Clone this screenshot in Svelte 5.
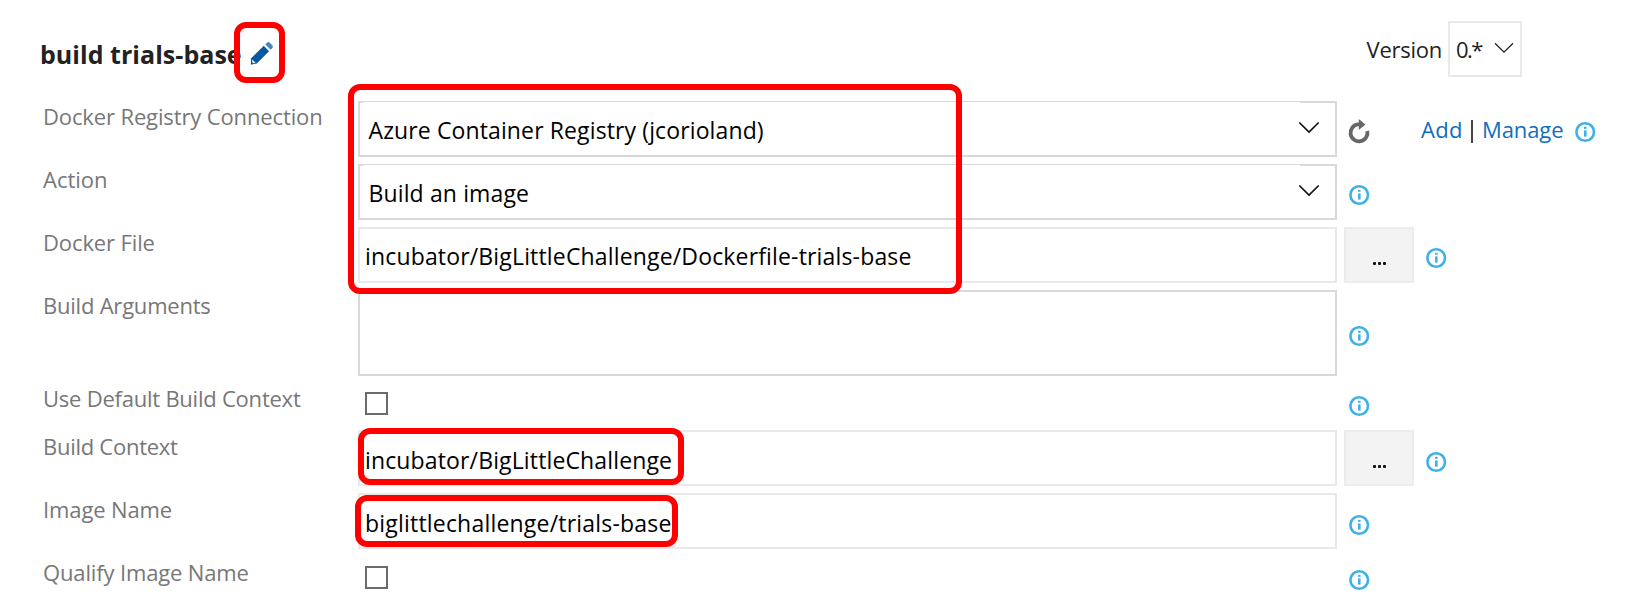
<script>
  const rows = [
    { label: 'Docker Registry Connection', ls: -0.13, kind: 'select', value: 'Azure Container Registry (jcorioland)', vs: 0.12, links: true },
    { label: 'Action', ls: 0, kind: 'select', value: 'Build an image', vs: 0.13 },
    { label: 'Docker File', ls: -0.12, kind: 'text', value: 'incubator/BigLittleChallenge/Dockerfile-trials-base', vs: 0.16, browse: true },
    { label: 'Build Arguments', ls: -0.22, kind: 'area' },
    { label: 'Use Default Build Context', ls: -0.23, kind: 'check' },
    { label: 'Build Context', ls: -0.27, kind: 'text low', value: 'incubator/BigLittleChallenge', vs: 0.14, browse: true },
    { label: 'Image Name', ls: -0.12, kind: 'text low', value: 'biglittlechallenge/trials-base', vs: 0.2 },
    { label: 'Qualify Image Name', ls: -0.14, kind: 'check last' }
  ];
</script>

{#snippet info()}
  <svg class="info" width="22" height="22" viewBox="0 0 22 22">
    <circle cx="11.2" cy="11" r="8.8" fill="#fff" stroke="#3fb0e8" stroke-width="2.6" />
    <rect x="10" y="5.8" width="2.6" height="2" fill="#3fb0e8" />
    <rect x="10" y="9.4" width="2.6" height="6.2" fill="#3fb0e8" />
  </svg>
{/snippet}

<main>
  <header>
    <h1>build trials-base</h1>
    <svg class="pencil" width="24" height="25" viewBox="0 0 24 25">
      <path d="M1.2 17.2 13.8 4.8 19 10.3 6.7 22.4 0.8 23.8Z" fill="#0558a2" />
      <path d="M2.4 18.6 5.6 21.8 3.2 22.3 2 21.1Z" fill="#dce8f3" />
      <path d="M15.3 3.4 17.2 1.5Q18.4.5 19.6 1.6L22.4 4.6Q23.4 5.8 22.4 7L20.6 8.8Z" fill="#4a86bd" />
    </svg>
    <div class="version">
      <span class="vlabel">Version</span>
      <div class="vbox">
        <span>0.*</span>
        <svg width="20" height="12" viewBox="0 0 20 12"><path d="M1 1.2 10 10.1 19 1.2" fill="none" stroke="#222" stroke-width="1.3" /></svg>
      </div>
    </div>
  </header>

  <section>
    {#each rows as r}
      <div class="row {r.kind}">
        <div class="label" style="letter-spacing: {r.ls}px">{r.label}</div>
        {#if r.kind.startsWith('check')}
          <div class="slot"><span class="box"></span></div>
        {:else}
          <div class="field">
            {#if r.value}<span style="letter-spacing: {r.vs}px">{r.value}</span>{/if}
            {#if r.kind === 'select'}
              <svg width="22" height="13" viewBox="0 0 22 13"><path d="M1.3 1.5 11 11.1 20.7 1.5" fill="none" stroke="#111" stroke-width="1.7" /></svg>
            {/if}
          </div>
        {/if}
        <div class="tail">
          {#if r.links}
            <svg class="refresh" width="24" height="26" viewBox="0 0 24 26">
              <path d="M13.2 6.4H10.8A8.5 8.5 0 1 0 20.3 13" fill="none" stroke="#666" stroke-width="3.8" />
              <path d="M11.8 1 18.4 6.5 11.8 12Z" fill="#666" />
            </svg>
            <a class="add" href="#add">Add</a><i></i><a class="manage" href="#manage">Manage</a>
          {/if}
          {#if r.browse}<button><b></b><b></b><b></b></button>{/if}
          {@render info()}
        </div>
      </div>
    {/each}
  </section>

  <div class="mark m1"></div>
  <div class="mark m2"></div>
  <div class="mark m3"></div>
  <div class="mark m4"></div>
</main>

<style>
  :global(body) { background: #fff; }
  main {
    position: relative;
    width: 1642px;
    height: 601px;
    overflow: hidden;
    font-family: "Open Sans", "Noto Sans", sans-serif;
    font-size: 22px;
    color: #222;
  }
  header { display: flex; height: 101px; padding-left: 40px; box-sizing: border-box; }
  h1 { margin: 37px 0 0; width: 209.5px; font-size: 25px; line-height: 34px; font-weight: 700; white-space: nowrap; letter-spacing: 0.04px; }
  .pencil { margin-top: 41px; }
  .version { display: flex; margin: 21px 120px 0 auto; }
  .vlabel { line-height: 57px; margin-right: 6px; letter-spacing: -0.25px; }
  .vbox {
    display: flex;
    align-items: center;
    box-sizing: border-box;
    width: 74px;
    height: 56px;
    border: 2px solid #e9e9e9;
    padding-left: 6px;
  }
  .vbox span { width: 37.5px; letter-spacing: -1.5px; line-height: 52px; }
  .vbox svg { margin-top: -2px; }

  .row {
    display: grid;
    grid-template-columns: 315px 979px 1fr;
    grid-template-rows: 100%;
    height: 56px;
    margin: 0 0 7px 43px;
  }
  .area { height: 86px; }
  .check { height: 40px; }
  .label { line-height: 31px; color: #777; white-space: nowrap; }
  .last .label, .low .label { padding-top: 1px; }
  .field {
    display: flex;
    align-items: flex-start;
    justify-content: space-between;
    box-sizing: border-box;
    border: 2px solid #e9e9e9;
    font-size: 23px;
    line-height: 54px;
    color: #000;
    padding-left: 5px;
    white-space: nowrap;
    overflow: hidden;
  }
  .low .field { line-height: 56px; }
  .select .field {
    border-color: #d9d9d9;
    border-top-width: 1px;
    padding: 1px 15px 0 8.5px;
    background: linear-gradient(#d9d9d9, #d9d9d9) right top / 35px 1px no-repeat, linear-gradient(#d9d9d9, #d9d9d9) left top / 3px 1px no-repeat;
  }
  .select .field svg { margin-top: 18px; }
  .area .field { border-color: #d9d9d9; }
  .slot { padding: 9px 0 0 7px; }
  .last .slot { padding-top: 10px; }
  .box { display: block; box-sizing: border-box; width: 23px; height: 23px; border: 2px solid #6b6b6b; }

  .tail { display: flex; align-items: flex-start; padding-left: 11px; }
  .info { margin-top: 20px; flex: none; }
  .area .info { margin-top: 35px; }
  .check .info { margin-top: 12px; }
  .last .info { margin-top: 13px; }
  .low .info { margin-top: 21px; }
  .refresh { margin: 17px 0 0 -1.5px; }
  .add { width: 50px; margin-left: 50.5px; letter-spacing: 0.3px; }
  .manage { width: 92px; margin-left: 9.5px; letter-spacing: -0.1px; }
  a { color: #106ebe; text-decoration: none; line-height: 57px; white-space: nowrap; }
  i { width: 1.5px; height: 23px; margin-top: 19px; background: #444; }
  button {
    display: flex;
    justify-content: center;
    gap: 2px;
    box-sizing: border-box;
    width: 70px;
    height: 56px;
    margin: 0 11px 0 -4px;
    padding: 33px 0 0;
    border: 2px solid #ececec;
    border-radius: 0;
    background: #f3f3f3;
  }
  b { width: 3px; height: 3px; border-radius: 1px; background: #111; }

  .mark { position: absolute; box-sizing: border-box; border: 6px solid #f00; border-radius: 12px; }
  .m1 { left: 234px; top: 22px; width: 51px; height: 61px; }
  .m2 { left: 348px; top: 84px; width: 614px; height: 210px; }
  .m3 { left: 358px; top: 428px; width: 326px; height: 57px; }
  .m4 { left: 355px; top: 495px; width: 323px; height: 52px; }
</style>
